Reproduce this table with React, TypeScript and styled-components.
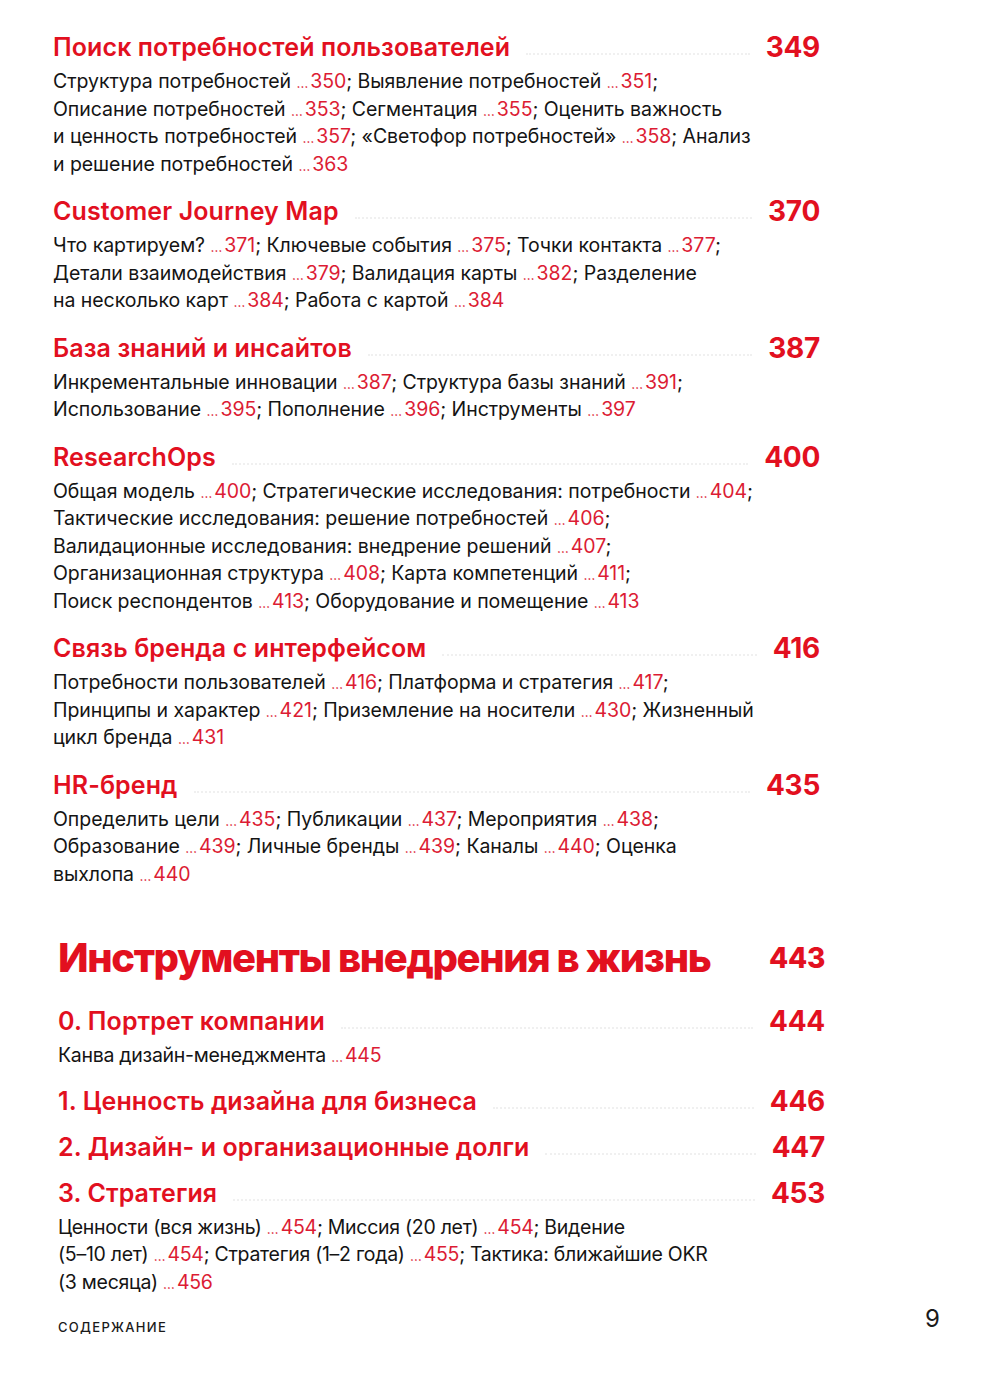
import React from "react"
import styled, { createGlobalStyle } from "styled-components"

type Entry = {
  title: string
  page: number
  lines?: string[]
}

const partOne: Entry[] = [
  {
    title: "Поиск потребностей пользователей",
    page: 349,
    lines: [
      "Структура потребностей [350]; Выявление потребностей [351];",
      "Описание потребностей [353]; Сегментация [355]; Оценить важность",
      "и ценность потребностей [357]; «Светофор потребностей» [358]; Анализ",
      "и решение потребностей [363]",
    ],
  },
  {
    title: "Customer Journey Map",
    page: 370,
    lines: [
      "Что картируем? [371]; Ключевые события [375]; Точки контакта [377];",
      "Детали взаимодействия [379]; Валидация карты [382]; Разделение",
      "на несколько карт [384]; Работа с картой [384]",
    ],
  },
  {
    title: "База знаний и инсайтов",
    page: 387,
    lines: [
      "Инкрементальные инновации [387]; Структура базы знаний [391];",
      "Использование [395]; Пополнение [396]; Инструменты [397]",
    ],
  },
  {
    title: "ResearchOps",
    page: 400,
    lines: [
      "Общая модель [400]; Стратегические исследования: потребности [404];",
      "Тактические исследования: решение потребностей [406];",
      "Валидационные исследования: внедрение решений [407];",
      "Организационная структура [408]; Карта компетенций [411];",
      "Поиск респондентов [413]; Оборудование и помещение [413]",
    ],
  },
  {
    title: "Связь бренда с интерфейсом",
    page: 416,
    lines: [
      "Потребности пользователей [416]; Платформа и стратегия [417];",
      "Принципы и характер [421]; Приземление на носители [430]; Жизненный",
      "цикл бренда [431]",
    ],
  },
  {
    title: "HR-бренд",
    page: 435,
    lines: [
      "Определить цели [435]; Публикации [437]; Мероприятия [438];",
      "Образование [439]; Личные бренды [439]; Каналы [440]; Оценка",
      "выхлопа [440]",
    ],
  },
]

const partTwo: Entry[] = [
  {
    title: "0. Портрет компании",
    page: 444,
    lines: ["Канва дизайн-менеджмента [445]"],
  },
  { title: "1. Ценность дизайна для бизнеса", page: 446 },
  { title: "2. Дизайн- и организационные долги", page: 447 },
  {
    title: "3. Стратегия",
    page: 453,
    lines: [
      "Ценности (вся жизнь) [454]; Миссия (20 лет) [454]; Видение",
      "(5–10 лет) [454]; Стратегия (1–2 года) [455]; Тактика: ближайшие OKR",
      "(3 месяца) [456]",
    ],
  },
]

// "text [123]; more" -> text pieces and page refs
function renderLine(line: string) {
  const parts = line.split(/\s?\[(\d+)\]/)
  return parts.map((part, i) =>
    i % 2 === 1 ? (
      <Ref key={i}>
        {" "}
        <Dots>…</Dots>
        {part}
      </Ref>
    ) : (
      <React.Fragment key={i}>{part}</React.Fragment>
    )
  )
}

function TocSection({ entry, condensed }: { entry: Entry; condensed?: boolean }) {
  return (
    <Section>
      <Row>
        <Title>{entry.title}</Title>
        <Leader />
        <PageNum>{entry.page}</PageNum>
      </Row>
      {entry.lines && (
        <Body $condensed={condensed}>
          {entry.lines.map((line) => (
            <Line key={line}>{renderLine(line)}</Line>
          ))}
        </Body>
      )}
    </Section>
  )
}

export default function App() {
  return (
    <>
      <GlobalStyle />
      <Page>
        <Part $left={53} $gap={18}>
          {partOne.map((entry) => (
            <TocSection key={entry.title} entry={entry} />
          ))}
        </Part>

        <Part $left={58} $gap={16}>
          <Row>
            <BigTitle>Инструменты внедрения в жизнь</BigTitle>
            <BigPageNum>443</BigPageNum>
          </Row>
          <Spacer />
          {partTwo.map((entry) => (
            <TocSection key={entry.title} entry={entry} condensed />
          ))}
        </Part>

        <Footer>
          <RunningHead>Содержание</RunningHead>
          <Folio>9</Folio>
        </Footer>
      </Page>
    </>
  )
}

const red = "#e2101f"
const refRed = "#dc1c34"

const GlobalStyle = createGlobalStyle`
  html, body {
    margin: 0;
    padding: 0;
    background: #ffffff;
  }
  body {
    font-family: Inter, "Noto Sans", "Liberation Sans", sans-serif;
    color: #141414;
    -webkit-font-smoothing: antialiased;
  }
`

const Page = styled.div`
  width: 1000px;
  min-height: 1375px;
  padding-top: 32px;
  box-sizing: border-box;
  display: flex;
  flex-direction: column;
`

const Part = styled.div<{ $left: number; $gap: number }>`
  margin-left: ${(p) => p.$left}px;
  width: 767px;
  display: flex;
  flex-direction: column;
  gap: ${(p) => p.$gap}px;

  & + & {
    margin-top: 46px;
  }
`

const Section = styled.section`
  display: flex;
  flex-direction: column;
  gap: 6px;
`

const Row = styled.div`
  display: flex;
  align-items: center;
`

const Title = styled.h2`
  margin: 0;
  font-size: 25px;
  line-height: 30px;
  font-weight: 600;
  color: ${red};
  letter-spacing: 0.1px;
  white-space: nowrap;
`

const Leader = styled.span`
  flex: 1;
  align-self: flex-end;
  margin: 0 16px 7px;
  border-bottom: 2px dotted #f0f0f0;
`

const PageNum = styled.span`
  font-size: 28px;
  line-height: 30px;
  font-weight: 700;
  color: ${red};
  letter-spacing: -0.3px;
`

const BigTitle = styled.h1`
  margin: 0;
  flex: 1;
  font-size: 40px;
  line-height: 48px;
  font-weight: 800;
  color: ${red};
  letter-spacing: -1.4px;
  white-space: nowrap;
`

const BigPageNum = styled(PageNum)`
  font-weight: 800;
  line-height: 48px;
`

const Spacer = styled.div`
  height: 8px;
  margin-bottom: -16px;
`

const Body = styled.div<{ $condensed?: boolean }>`
  font-size: 19.5px;
  line-height: 27.5px;
  font-weight: 400;
  letter-spacing: ${(p) => (p.$condensed ? "-0.28px" : "-0.05px")};
`

const Line = styled.div`
  white-space: nowrap;
  height: 27.5px;
`

const Ref = styled.span`
  color: ${refRed};
`

const Dots = styled.span`
  font-size: 0.7em;
  line-height: 1;
  letter-spacing: -1px;
  margin-right: 3px;
`

const Footer = styled.footer`
  margin: 9px 60px 0 58px;
  display: flex;
  justify-content: space-between;
  align-items: flex-end;
`

const RunningHead = styled.span`
  font-size: 13px;
  line-height: 18px;
  font-weight: 500;
  letter-spacing: 1.3px;
  text-transform: uppercase;
  color: #1a1a1a;
`

const Folio = styled.span`
  font-size: 24px;
  line-height: 28px;
  font-weight: 400;
  color: #1a1a1a;
  margin-bottom: 3px;
`
